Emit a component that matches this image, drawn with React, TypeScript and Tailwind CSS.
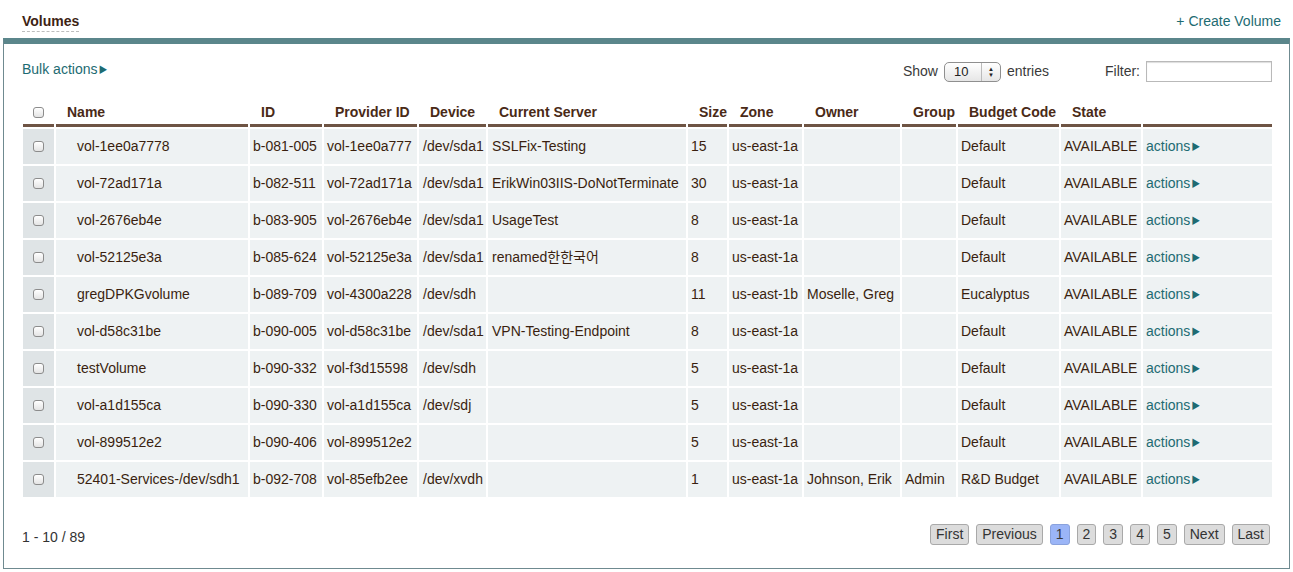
import { ReactNode } from 'react'

type Vol = {
  name: string
  id: string
  provider: string
  device: string
  server: string
  size: string
  zone: string
  owner: string
  group: string
  budget: string
}

const volumes: Vol[] = [
  { name: 'vol-1ee0a7778', id: 'b-081-005', provider: 'vol-1ee0a777', device: '/dev/sda1', server: 'SSLFix-Testing', size: '15', zone: 'us-east-1a', owner: '', group: '', budget: 'Default' },
  { name: 'vol-72ad171a', id: 'b-082-511', provider: 'vol-72ad171a', device: '/dev/sda1', server: 'ErikWin03IIS-DoNotTerminate', size: '30', zone: 'us-east-1a', owner: '', group: '', budget: 'Default' },
  { name: 'vol-2676eb4e', id: 'b-083-905', provider: 'vol-2676eb4e', device: '/dev/sda1', server: 'UsageTest', size: '8', zone: 'us-east-1a', owner: '', group: '', budget: 'Default' },
  { name: 'vol-52125e3a', id: 'b-085-624', provider: 'vol-52125e3a', device: '/dev/sda1', server: 'renamed한한국어', size: '8', zone: 'us-east-1a', owner: '', group: '', budget: 'Default' },
  { name: 'gregDPKGvolume', id: 'b-089-709', provider: 'vol-4300a228', device: '/dev/sdh', server: '', size: '11', zone: 'us-east-1b', owner: 'Moselle, Greg', group: '', budget: 'Eucalyptus' },
  { name: 'vol-d58c31be', id: 'b-090-005', provider: 'vol-d58c31be', device: '/dev/sda1', server: 'VPN-Testing-Endpoint', size: '8', zone: 'us-east-1a', owner: '', group: '', budget: 'Default' },
  { name: 'testVolume', id: 'b-090-332', provider: 'vol-f3d15598', device: '/dev/sdh', server: '', size: '5', zone: 'us-east-1a', owner: '', group: '', budget: 'Default' },
  { name: 'vol-a1d155ca', id: 'b-090-330', provider: 'vol-a1d155ca', device: '/dev/sdj', server: '', size: '5', zone: 'us-east-1a', owner: '', group: '', budget: 'Default' },
  { name: 'vol-899512e2', id: 'b-090-406', provider: 'vol-899512e2', device: '', server: '', size: '5', zone: 'us-east-1a', owner: '', group: '', budget: 'Default' },
  { name: '52401-Services-/dev/sdh1', id: 'b-092-708', provider: 'vol-85efb2ee', device: '/dev/xvdh', server: '', size: '1', zone: 'us-east-1a', owner: 'Johnson, Erik', group: 'Admin', budget: 'R&D Budget' },
]

const headers = ['Name', 'ID', 'Provider ID', 'Device', 'Current Server', 'Size', 'Zone', 'Owner', 'Group', 'Budget Code', 'State', '']
const widths = [192, 72, 93, 67, 198, 39, 73, 96, 54, 101, 80, 129]

function Checkbox() {
  return (
    <span className="inline-block w-[11px] h-[11px] rounded-[3px] border border-[#8c8c8c] bg-gradient-to-b from-white to-[#e4e4e4] shadow-[inset_0_1px_0_#fff]" />
  )
}

function Arrow() {
  return <span className="inline-block ml-[1px] text-[9px] align-[1px]">&#9654;</span>
}

function Btn({ children, active }: { children: ReactNode; active?: boolean }) {
  return (
    <span
      className={
        'h-[21px] flex items-center px-[5px] rounded-[3px] border text-[14px] ' +
        (active ? 'bg-[#9bb5f7] border-[#8aa2dc] text-[#3b3b3b]' : 'bg-[#dcdcdc] border-[#a9a9a9] text-[#333]')
      }
    >
      {children}
    </span>
  )
}

export default function App() {
  return (
    <div
      className="w-[1293px] h-[572px] bg-white text-[14px] text-[#3a1f0f] overflow-hidden"
      style={{ fontFamily: '"Liberation Sans", Arial, "Noto Sans CJK KR", sans-serif' }}
    >
      <div className="h-[38px] flex items-start justify-between pl-[22px] pr-[12px] pt-[13px]">
        <span className="font-bold text-[#3d2314] border-b border-dashed border-[#bdbdbd] leading-[17px] pb-[1px]">Volumes</span>
        <span className="text-[#1d6b72] leading-[17px]">+ Create Volume</span>
      </div>

      <div className="ml-[3px] w-[1287px] h-[531px] border border-[#6f8a90] border-t-[6px] border-t-[#5b868b] px-[17px]">
        <div className="flex items-center h-[38px] mt-[6px]">
          <span className="ml-[1px] text-[#1d6b72]">
            Bulk actions<Arrow />
          </span>
          <div className="ml-auto flex items-center mt-[5px] text-[#3a3a3a]">
            <span>Show</span>
            <span className="ml-[6px] w-[57px] h-[20px] rounded-[5px] border border-[#8f8f8f] bg-gradient-to-b from-white to-[#e6e6e6] flex items-center text-[13px] text-[#222]">
              <span className="pl-[9px] flex-1">10</span>
              <span className="w-[19px] h-full border-l border-[#bbb] flex flex-col items-center justify-center leading-none text-[6px]">
                <span>&#9650;</span>
                <span>&#9660;</span>
              </span>
            </span>
            <span className="ml-[6px]">entries</span>
            <span className="ml-[56px]">Filter:</span>
            <span className="ml-[6px] w-[126px] h-[21px] border border-[#b9b9b9] shadow-[inset_0_1px_1px_#ddd] bg-white" />
          </div>
        </div>

        <table className="table-fixed border-separate border-spacing-[2px] w-[1252px] mt-[11px]">
          <colgroup>
            <col className="w-[31px]" />
            {widths.map((w, i) => (
              <col key={i} style={{ width: w }} />
            ))}
          </colgroup>
          <thead>
            <tr>
              <th className="h-[26px] border-b-[3px] border-[#6e5444] align-middle pb-[1px]">
                <span className="flex justify-center">
                  <Checkbox />
                </span>
              </th>
              {headers.map((h, i) => (
                <th
                  key={i}
                  className="h-[26px] border-b-[3px] border-[#6e5444] text-left pl-[11px] font-bold text-[#4a2a17] whitespace-nowrap align-middle pb-[1px]"
                >
                  {h}
                </th>
              ))}
            </tr>
          </thead>
          <tbody>
            {volumes.map((v) => (
              <tr key={v.id} className="h-[35px]">
                <td className="bg-[#dfe4e6] text-center align-middle">
                  <span className="flex justify-center">
                    <Checkbox />
                  </span>
                </td>
                <td className="bg-[#eef2f3] pl-[21px] whitespace-nowrap">{v.name}</td>
                <td className="bg-[#eef2f3] pl-[3px] whitespace-nowrap">{v.id}</td>
                <td className="bg-[#eef2f3] pl-[3px] whitespace-nowrap">{v.provider}</td>
                <td className="bg-[#eef2f3] pl-[4px] whitespace-nowrap">{v.device}</td>
                <td className="bg-[#eef2f3] pl-[4px] whitespace-nowrap">{v.server}</td>
                <td className="bg-[#eef2f3] pl-[3px] whitespace-nowrap">{v.size}</td>
                <td className="bg-[#eef2f3] pl-[3px] whitespace-nowrap">{v.zone}</td>
                <td className="bg-[#eef2f3] pl-[3px] whitespace-nowrap">{v.owner}</td>
                <td className="bg-[#eef2f3] pl-[3px] whitespace-nowrap">{v.group}</td>
                <td className="bg-[#eef2f3] pl-[3px] whitespace-nowrap">{v.budget}</td>
                <td className="bg-[#eef2f3] pl-[3px] whitespace-nowrap">AVAILABLE</td>
                <td className="bg-[#eef2f3] pl-[3px] whitespace-nowrap text-[#1d6b72]">
                  actions<Arrow />
                </td>
              </tr>
            ))}
          </tbody>
        </table>

        <div className="flex items-start mt-[25px] pr-[2px]">
          <span className="ml-[1px] mt-[3px] leading-[20px] text-[#333]">1 - 10 / 89</span>
          <div className="ml-auto flex items-center gap-[7px]">
            <Btn>First</Btn>
            <Btn>Previous</Btn>
            <Btn active>1</Btn>
            <Btn>2</Btn>
            <Btn>3</Btn>
            <Btn>4</Btn>
            <Btn>5</Btn>
            <Btn>Next</Btn>
            <Btn>Last</Btn>
          </div>
        </div>
      </div>
    </div>
  )
}
